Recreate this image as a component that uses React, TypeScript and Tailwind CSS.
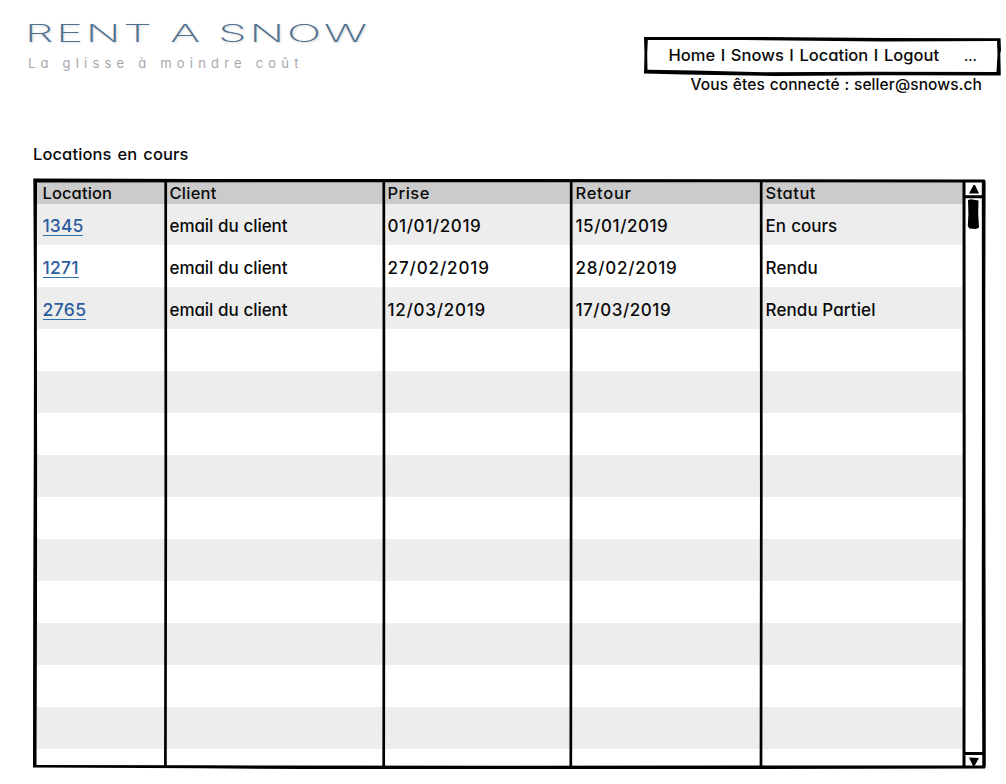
const font = "font-['Inter','Open_Sans',sans-serif] [font-feature-settings:'cv11']";

type Cell = { text: string; className: string };

const headers: Cell[] = [
  { text: 'Location', className: 'pl-[5.5px] tracking-[0.1px]' },
  { text: 'Client', className: 'pl-[3.5px] tracking-[0.25px]' },
  { text: 'Prise', className: 'pl-[3.5px] tracking-[0.5px]' },
  { text: 'Retour', className: 'pl-[3.5px] tracking-[0.7px]' },
  { text: 'Statut', className: 'pl-[3.5px] tracking-[0.5px]' },
];

type Rental = { id: Cell; client: string; from: Cell; to: Cell; status: Cell };

const rows: Rental[] = [
  {
    id: { text: '1345', className: 'tracking-[0.1px]' },
    client: 'email du client',
    from: { text: '01/01/2019', className: 'tracking-[0.6px]' },
    to: { text: '15/01/2019', className: 'tracking-[0.55px]' },
    status: { text: 'En cours', className: 'tracking-[-0.05px] [word-spacing:1px]' },
  },
  {
    id: { text: '1271', className: 'tracking-[0.25px]' },
    client: 'email du client',
    from: { text: '27/02/2019', className: 'tracking-[0.9px]' },
    to: { text: '28/02/2019', className: 'tracking-[0.75px]' },
    status: { text: 'Rendu', className: 'tracking-[0.15px]' },
  },
  {
    id: { text: '2765', className: 'tracking-[0.4px]' },
    client: 'email du client',
    from: { text: '12/03/2019', className: 'tracking-[0.75px]' },
    to: { text: '17/03/2019', className: 'tracking-[0.55px]' },
    status: { text: 'Rendu Partiel', className: 'tracking-[0.1px]' },
  },
];

const columns = 'grid grid-cols-[129px_218px_188px_190px_203px]';

function Logo() {
  return (
    <div className="w-[345px] pt-[18px]">
      <h1 className="-ml-[3px] w-max origin-left scale-x-[1.89] text-[24px] leading-[32px] font-extralight tracking-[1.5px] whitespace-nowrap text-[#4f7090] [text-shadow:0.5px_1px_2px_#00000030]">
        RENT A SNOW
      </h1>
      <p className="mt-[4px] w-max text-[13px] leading-[18px] font-normal tracking-[5.2px] whitespace-nowrap text-[#a6a6aa]">
        La glisse à moindre coût
      </p>
    </div>
  );
}

function Nav() {
  return (
    <div className="mt-[36px] w-[360px]">
      <nav className="relative flex h-[40px] items-center pb-[2px] pl-[24.5px] text-[16.5px] whitespace-nowrap">
        <svg className="absolute inset-0" width="360" height="40" viewBox="0 0 360 40">
          <path
            d="M0 1 L120 1 L240 2 L356.5 2.3 L357 14 L356.3 18 L356.8 38 L356.5 39.6 L240 39.2 L130 40 L40 38.6 L0 37.4 L0.5 18Z M3.8 4 L3.2 18 L3.5 33.8 L50 34.4 L120 36.2 L230 35.7 L352.5 36 L353.5 18 L353 5 L240 5.4 L100 4Z"
            fillRule="evenodd"
            fill="#000"
          />
        </svg>
        <span className="tracking-[0.03px] [word-spacing:1.1px]">Home I Snows I Location I Logout</span>
        <span className="ml-[25px] text-[14px]">...</span>
      </nav>
      <p className="-mt-[1px] pl-[46.5px] text-[15.5px] leading-[20px] tracking-[0.1px] [word-spacing:0.5px] whitespace-nowrap">
        Vous êtes connecté : seller@snows.ch
      </p>
    </div>
  );
}

function SketchLines() {
  return (
    <svg className="absolute inset-0" width="955" height="593" viewBox="33 178 955 593">
      <path
        fillRule="evenodd"
        d="M33.3 178.6 L200 179 L500 179 L984.5 179.6 L985.6 181 L985.3 300 L985.4 500 L985.8 766 L985 768.6 L700 769 L300 769 L200 768.3 L33 767.4 L33.2 600 L33.8 450 L34 300Z M37 182.4 L36.8 300 L37.1 450 L37 600 L36.5 765 L200 765.3 L500 765.8 L982.3 765.4 L981.8 600 L982 400 L981.8 182.5 L500 182.2Z"
      />
      <path fill="none" stroke="#000" strokeWidth="2.7" d="M165.7 182 L165.8 500 L165.4 768 M383.8 182 L384 500 L383.7 767 M571.2 182 L571.2 400 L570.8 767 M761.2 182 L761.3 500 L761 767" />
      <path fill="none" stroke="#000" strokeWidth="3" d="M964 181 L964.2 500 L964 767 M964 196.7 L983 196.7 M964 753.6 L983 753.6" />
      <path d="M973.5 185 L975 185 L979 193.5 L969 193.5Z M969 757.6 L979 758 L974.5 766 L973 766Z" />
      <path d="M968 200 L971 199.3 L978.5 200.5 L978.2 214 L979 227.5 L976 229 L969.5 228.5 L967.8 226 L968.4 214Z" />
    </svg>
  );
}

function RentalsTable() {
  return (
    <div className="relative ml-[33px] h-[593px] w-[955px] text-[17px]">
      <div className="h-[590px] w-[930px] overflow-hidden pt-[2px] pl-[4px]">
        <div className={`${columns} h-[23.5px] items-center bg-[#cbcbcb] pt-[2px] text-[16.5px] leading-[22px]`}>
          {headers.map((h) => (
            <span key={h.text} className={h.className}>{h.text}</span>
          ))}
        </div>
        {Array.from({ length: 14 }, (_, i) => {
          const row = rows[i];
          return (
            <div key={i} className={`${columns} h-[41.95px] items-center pt-[4px] odd:bg-white even:bg-[#ededed]`}>
              {row && (
                <>
                  <span className="pl-[5.5px]">
                    <a className={`inline-block border-b border-[#2a72b0] text-[17.5px] leading-[19px] text-[#2a5c9e] ${row.id.className}`}>
                      {row.id.text}
                    </a>
                  </span>
                  <span className="pl-[3.5px] tracking-[-0.1px] [word-spacing:0.5px]">{row.client}</span>
                  <span className={`pl-[3.5px] ${row.from.className}`}>{row.from.text}</span>
                  <span className={`pl-[3.5px] ${row.to.className}`}>{row.to.text}</span>
                  <span className={`pl-[3.5px] ${row.status.className}`}>{row.status.text}</span>
                </>
              )}
            </div>
          );
        })}
      </div>
      <SketchLines />
    </div>
  );
}

export default function App() {
  return (
    <div className={`h-[784px] w-[1006px] overflow-hidden bg-white font-[450] text-[#0a0a0a] ${font}`}>
      <header className="flex h-[144px] justify-between pr-[2px] pl-[28px]">
        <Logo />
        <Nav />
      </header>
      <h2 className="h-[34px] pl-[33px] text-[16.5px] leading-[20px] tracking-[0.1px] [word-spacing:1.5px]">Locations en cours</h2>
      <RentalsTable />
    </div>
  );
}
